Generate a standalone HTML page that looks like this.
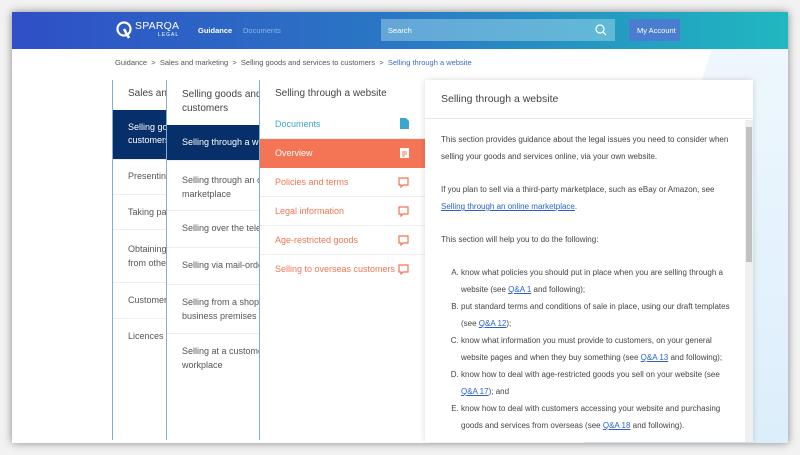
<!DOCTYPE html>
<html><head><style>
*{margin:0;padding:0;box-sizing:border-box}
body{width:800px;height:455px;background:#f2f2f2;font-family:"Liberation Sans",sans-serif;position:relative;overflow:hidden}
#frame{position:absolute;left:12px;top:12px;width:776px;height:431px;background:#fff;box-shadow:0 0 8px rgba(0,0,0,.45);overflow:hidden}
#hdr{position:absolute;left:0;top:0;width:776px;height:37px;background:linear-gradient(90deg,#2f4fc6 0%,#2a78c4 50%,#20b8c0 100%)}
.abs{position:absolute}
.t{position:absolute;white-space:nowrap}
.col{position:absolute;top:68px;height:360px;background:#fff;border-left:1px solid #7fb0d4;overflow:hidden}
.it{position:absolute;left:0;right:0;border-bottom:1px solid #eee;font-size:9px;color:#555}
.sel{background:#07306a;color:#fff}
.o{color:#f07552;font-size:9px}
p,li{font-size:8px;color:#444;line-height:17px}
a{color:#2a62c8}
</style></head><body>
<div id="frame">
<div class="abs" style="left:700px;top:37px;width:300px;height:400px;background:linear-gradient(180deg,#eef7fd 0%,#dceefb 100%);transform:skewX(-18deg);transform-origin:top left"></div>
<div id="hdr">
 <svg class="abs" style="left:104px;top:9px" width="17" height="18" viewBox="0 0 17 18"><circle cx="8" cy="8" r="6.5" fill="none" stroke="#fff" stroke-width="2.2"/><path d="M8 8 L13 17" stroke="#fff" stroke-width="2.5"/></svg>
 <div class="t" style="left:123px;top:8px;color:#fff;font-size:10.5px;letter-spacing:.2px">SPARQA</div>
 <div class="t" style="left:146px;top:20px;color:#fff;font-size:5px;letter-spacing:1px">LEGAL</div>
 <div class="t" style="left:186px;top:14px;color:#fff;font-size:7.5px;font-weight:bold">Guidance</div>
 <div class="t" style="left:231px;top:14px;color:#8ab4e8;font-size:7.5px">Documents</div>
 <div class="abs" style="left:369px;top:7px;width:234px;height:22px;background:rgba(160,215,235,.5)"></div>
 <div class="t" style="left:376px;top:14px;color:#fff;font-size:7.5px">Search</div>
 <svg class="abs" style="left:583px;top:12px" width="12" height="12" viewBox="0 0 12 12"><circle cx="5" cy="5" r="4" fill="none" stroke="#fff" stroke-width="1.2"/><path d="M8 8l3 3" stroke="#fff" stroke-width="1.2"/></svg>
 <div class="abs" style="left:617px;top:7px;width:51px;height:22px;background:#4a7cd0"></div>
 <div class="t" style="left:625px;top:14px;color:#fff;font-size:7.5px">My Account</div>
</div>
<div class="t" style="left:103px;top:46px;font-size:7.5px;color:#555">Guidance &nbsp;&gt;&nbsp; Sales and marketing &nbsp;&gt;&nbsp; Selling goods and services to customers &nbsp;&gt;&nbsp; <span style="color:#3a6cc8">Selling through a website</span></div>

<div class="col" style="left:100px;width:100px">
 <div class="t" style="left:15px;top:8px;font-size:10px;color:#444">Sales and marketing</div>
 <div class="it sel" style="top:30px;height:50px"><div class="t" style="left:15px;top:11px;line-height:13px">Selling goods and<br>customers</div></div>
 <div class="it" style="top:80px;height:35px"><div class="t" style="left:15px;top:11px">Presenting</div></div>
 <div class="it" style="top:115px;height:35px"><div class="t" style="left:15px;top:12px">Taking payment</div></div>
 <div class="it" style="top:150px;height:53px"><div class="t" style="left:15px;top:12px;line-height:14px">Obtaining<br>from others</div></div>
 <div class="it" style="top:203px;height:36px"><div class="t" style="left:15px;top:12px">Customers</div></div>
 <div class="it" style="top:239px;height:36px;border:0"><div class="t" style="left:15px;top:12px">Licences</div></div>
</div>
<div class="col" style="left:154px;width:100px">
 <div class="t" style="left:15px;top:8px;font-size:10px;color:#444;line-height:14px">Selling goods and services to<br>customers</div>
 <div class="it sel" style="top:45px;height:36px"><div class="t" style="left:15px;top:12px">Selling through a website</div></div>
 <div class="it" style="top:81px;height:50px"><div class="t" style="left:15px;top:12px;line-height:14px">Selling through an online<br>marketplace</div></div>
 <div class="it" style="top:131px;height:37px"><div class="t" style="left:15px;top:12px">Selling over the telephone</div></div>
 <div class="it" style="top:168px;height:37px"><div class="t" style="left:15px;top:12px">Selling via mail-order</div></div>
 <div class="it" style="top:205px;height:49px"><div class="t" style="left:15px;top:10px;line-height:14px">Selling from a shop or other<br>business premises</div></div>
 <div class="it" style="top:254px;height:50px;border:0"><div class="t" style="left:15px;top:10px;line-height:14px">Selling at a customer's<br>workplace</div></div>
</div>
<div class="col" style="left:247px;width:170px">
 <div class="t" style="left:15px;top:8px;font-size:10px;color:#444">Selling through a website</div>
 <div class="it" style="top:30px;height:29px"><div class="t" style="left:15px;top:9px;color:#3aa8cc">Documents</div>
  <svg class="abs" style="left:140px;top:8px" width="9" height="11"><path d="M0 0h6l3 3v8H0z" fill="#3aa8cc"/></svg></div>
 <div class="it" style="top:59px;height:29px;background:#f47556;border:0"><div class="t" style="left:15px;top:9px;color:#fff">Overview</div>
  <svg class="abs" style="left:140px;top:8px" width="9" height="11"><rect x="0" y="1" width="9" height="10" fill="#fff"/><path d="M2 5h5M2 7h5M2 9h3" stroke="#f47556"/></svg></div>
 <div class="it" style="top:88px;height:29px"><div class="t o" style="left:15px;top:9px">Policies and terms</div><svg class="abs" style="left:138px;top:9px" width="11" height="11"><path d="M1 1h9v7H5l-2 2V8H1z" fill="none" stroke="#f07552" stroke-width="1.2"/></svg></div>
 <div class="it" style="top:117px;height:29px"><div class="t o" style="left:15px;top:9px">Legal information</div><svg class="abs" style="left:138px;top:9px" width="11" height="11"><path d="M1 1h9v7H5l-2 2V8H1z" fill="none" stroke="#f07552" stroke-width="1.2"/></svg></div>
 <div class="it" style="top:146px;height:29px"><div class="t o" style="left:15px;top:9px">Age-restricted goods</div><svg class="abs" style="left:138px;top:9px" width="11" height="11"><path d="M1 1h9v7H5l-2 2V8H1z" fill="none" stroke="#f07552" stroke-width="1.2"/></svg></div>
 <div class="it" style="top:175px;height:29px;border:0"><div class="t o" style="left:15px;top:9px">Selling to overseas customers</div><svg class="abs" style="left:138px;top:9px" width="11" height="11"><path d="M1 1h9v7H5l-2 2V8H1z" fill="none" stroke="#f07552" stroke-width="1.2"/></svg></div>
</div>
<div class="abs" style="left:413px;top:68px;width:328px;height:362px;background:#fff;box-shadow:0 0 6px rgba(0,0,0,.15);overflow:hidden">
 <div class="t" style="left:16px;top:13px;font-size:10.5px;color:#444">Selling through a website</div>
 <div class="abs" style="left:0;top:38px;width:328px;height:1px;background:#e6e6e6"></div>
 <div class="abs" style="left:320px;top:40px;width:8px;height:322px;background:#f0f0f0"></div>
 <div class="abs" style="left:321px;top:47px;width:6px;height:135px;background:#c1c1c1"></div>
 <div class="abs" style="left:16px;top:51px;width:290px">
  <p>This section provides guidance about the legal issues you need to consider when selling your goods and services online, via your own website.</p>
  <p style="margin-top:16px">If you plan to sell via a third-party marketplace, such as eBay or Amazon, see <a href="#">Selling through an online marketplace</a>.</p>
  <p style="margin-top:16px">This section will help you to do the following:</p>
  <ol type="A" style="margin-top:16px;padding-left:20px">
   <li>know what policies you should put in place when you are selling through a website (see <a href="#">Q&amp;A 1</a> and following);</li>
   <li>put standard terms and conditions of sale in place, using our draft templates (see <a href="#">Q&amp;A 12</a>);</li>
   <li>know what information you must provide to customers, on your general website pages and when they buy something (see <a href="#">Q&amp;A 13</a> and following);</li>
   <li>know how to deal with age-restricted goods you sell on your website (see <a href="#">Q&amp;A 17</a>); and</li>
   <li>know how to deal with customers accessing your website and purchasing goods and services from overseas (see <a href="#">Q&amp;A 18</a> and following).</li>
  </ol>
 </div>
</div>
</div>
</body></html>
